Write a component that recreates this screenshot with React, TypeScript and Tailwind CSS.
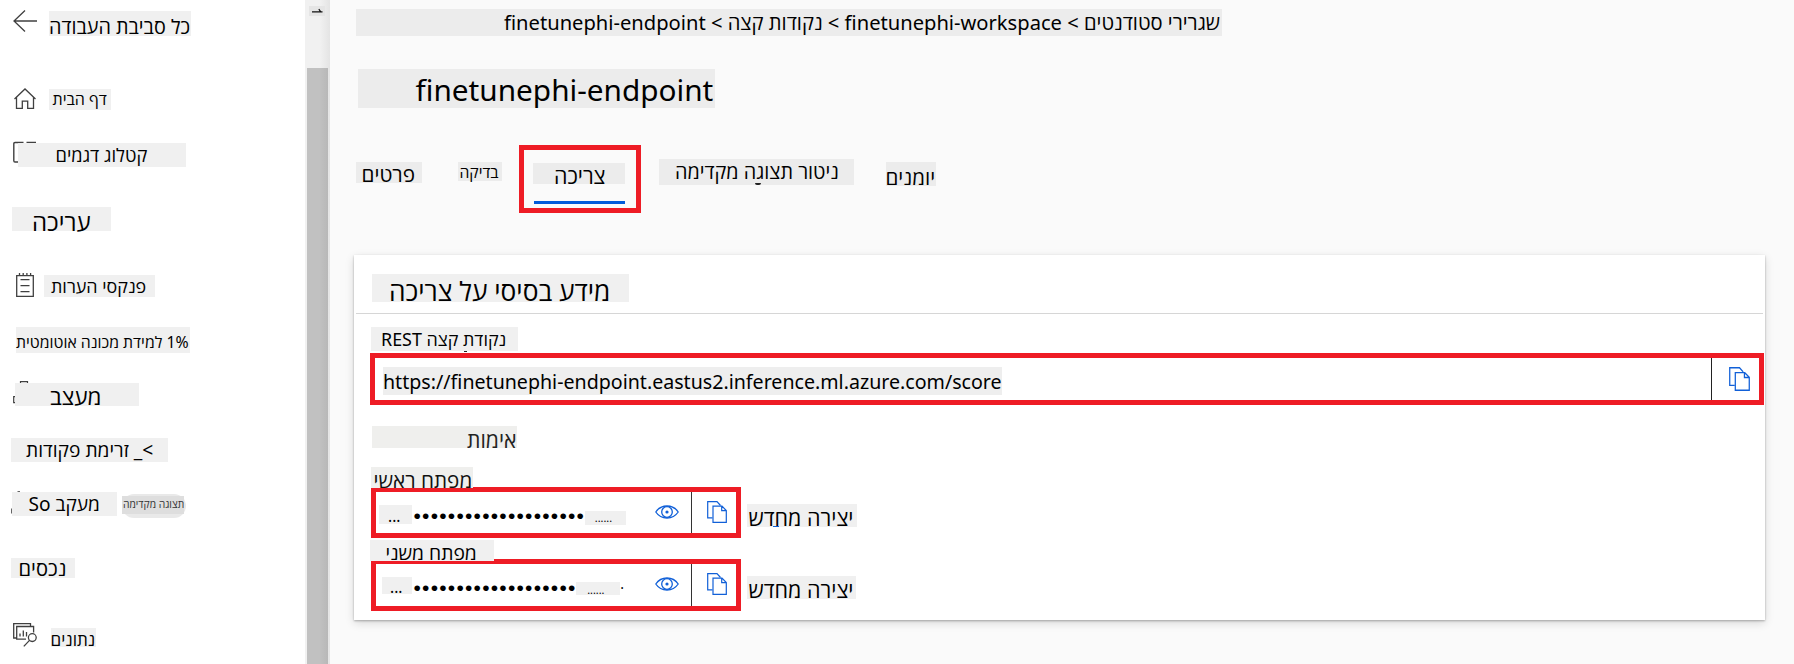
import type { ReactNode } from "react";

function Label({ box, text, children }: { box: string; text: string; children: ReactNode }) {
  return (
    <div className={`shrink-0 ${box}`}>
      <span dir="rtl" className={`block w-max whitespace-pre ${text}`}>
        {children}
      </span>
    </div>
  );
}

function ArrowLeft() {
  return (
    <svg className="ml-[13px] h-6 w-6 shrink-0" viewBox="0 0 24 24" fill="none" stroke="#404040" strokeWidth="1.3">
      <path d="M24 11H1M12 0.5L1 11l11 10.5" />
    </svg>
  );
}

function HomeIcon() {
  return (
    <svg className="ml-[14px] h-[22px] w-[22px] shrink-0" viewBox="0 0 22 22" fill="none" stroke="#404040" strokeWidth="1.3">
      <path d="M0.5 11L11 1l10.5 10M2.5 9.5v10.9h5.8v-7.2h5.4v7.2h5.8V9.5" />
    </svg>
  );
}

function CatalogIcon() {
  return (
    <svg className="ml-[13px] h-6 w-6 shrink-0" viewBox="0 0 24 24" fill="none" stroke="#404040" strokeWidth="1.4">
      <path d="M10.5 1.5H2a1.2 1.2 0 0 0-1.2 1.2v17.1A1.2 1.2 0 0 0 2 21h8M13.500 1.500H23" />
    </svg>
  );
}

function NotebookIcon() {
  return (
    <svg className="ml-[16px] h-6 w-[18px] shrink-0" viewBox="0 0 18 24" fill="none" stroke="#404040" strokeWidth="1.3">
      <path d="M0.700 2.700H17.300V23.300H0.700zM3.500 0v3M7.200 0v3M10.900 0v3M14.600 0v3M4.500 6.600h9M4.500 12.600h9M4.500 18.600h9" />
    </svg>
  );
}

function DesignerIcon() {
  return (
    <svg className="ml-[13px] h-[25px] w-[16px] shrink-0" viewBox="0 0 16 25" fill="none" stroke="#404040" strokeWidth="1.2">
      <path d="M7.500 3V0.700h7V3M3 15.700H0.700v6H3" />
    </svg>
  );
}

function DataIcon() {
  return (
    <svg className="ml-[13px] h-6 w-6 shrink-0" viewBox="0 0 24 24" fill="none" stroke="#404040" strokeWidth="1.3">
      <path d="M3.500 15H0.700V0.700H17.500V3M13 16.200H3.700V3.500H20.600V9.500M7 13.500v-3M10.300 13.500V7.500M13.500 13.500V9" />
      <circle cx="19.300" cy="14.600" r="3.900" />
      <path d="M16.500 17.400L10.800 23.400" />
    </svg>
  );
}

function EyeIcon() {
  return (
    <svg className="h-[14px] w-6" viewBox="0 0 24 14" fill="none" stroke="#1160d8" strokeWidth="1.300">
      <path d="M0.800 7C3.500 3 7.500 1 12 1s8.500 2 11.200 6C20.500 11 16.500 13 12 13S3.500 11 0.800 7z" />
      <circle cx="12" cy="7" r="5.300" />
      <circle cx="12" cy="7" r="1.600" fill="#1160d8" stroke="none" />
    </svg>
  );
}

function CopyIcon({ className }: { className: string }) {
  return (
    <svg className={className} viewBox="0 0 20 22" preserveAspectRatio="none" fill="none" stroke="#1160d8" strokeWidth="1.200">
      <path d="M5.500 16.900H0.700V0.700H10L13.500 4.500" />
      <path d="M6 5.200H15L19.300 9.500V21.300H6zM14.700 5.200V9.600H19.300" />
    </svg>
  );
}

function KeyField({ box, left, bullets, right }: { box: string; left: ReactNode; bullets: string; right: ReactNode }) {
  return (
    <div className={`flex w-[370px] shrink-0 border-[5px] border-[#ee1c25] ${box}`}>
      <div className="flex w-[315px] items-start">
        {left}
        <span className="ml-[1.500px] mt-[9px] shrink-0 font-['Liberation_Sans',sans-serif] text-[21px] leading-[30px] tracking-[1.230px] text-black">{bullets}</span>
        {right}
      </div>
      <div className="flex flex-1 border-l border-[#333] pl-[15px] pt-[9px]">
        <CopyIcon className="h-[22px] w-5" />
      </div>
    </div>
  );
}

const PANEL = "bg-[#f0f0f0]";
const CHIP = "bg-[#ececec]";

export default function App() {
  return (
    <div className="flex h-[664px] w-[1794px] overflow-hidden bg-[#fafafa] font-['Noto_Sans','Open_Sans',sans-serif] text-black">
      <nav className="flex w-[305px] shrink-0 flex-col bg-white">
        <div className="mt-[10px] flex h-[26px] shrink-0">
          <ArrowLeft />
          <Label box={`ml-3 mt-[1px] h-[25px] w-[142px] ${PANEL}`} text="text-[19.800px] leading-[31.500px]">כל סביבת העבודה</Label>
        </div>
        <div className="mt-[52px] flex h-[22px] shrink-0">
          <HomeIcon />
          <Label box={`ml-[13px] mt-[1px] h-[21px] w-[62px] ${PANEL}`} text="ml-[3.500px] text-[16px] font-medium leading-[21.400px]">דף הבית</Label>
        </div>
        <div className="mt-[31px] flex h-[26px] shrink-0">
          <CatalogIcon />
          <Label box={`-ml-[19px] mt-[2px] h-6 w-[168px] ${PANEL}`} text="ml-[37.500px] text-[18.300px] leading-[24.700px]">קטלוג דגמים</Label>
        </div>
        <Label box={`ml-3 mt-10 h-6 w-[99px] ${PANEL}`} text="ml-5 text-[24px] leading-[29px]">עריכה</Label>
        <div className="mt-[42px] flex h-6 shrink-0">
          <NotebookIcon />
          <Label box={`ml-[10px] mt-[2px] h-[22px] w-[111px] ${PANEL}`} text="ml-[7px] text-[17.900px] leading-[22px]">פנקסי הערות</Label>
        </div>
        <Label box={`ml-4 mt-[30px] h-[26px] w-[174px] ${PANEL}`} text="text-[15.800px] leading-[30.500px]">1% למידת מכונה אוטומטית</Label>
        <div className="mt-7 flex h-[25px] shrink-0">
          <DesignerIcon />
          <Label box={`-ml-[14px] mt-[2px] h-[23px] w-[124px] ${PANEL}`} text="ml-[35px] text-[22.500px] leading-[28.500px]">מעצב</Label>
        </div>
        <Label box={`ml-[11px] mt-8 h-6 w-[157px] ${PANEL}`} text="ml-[15px] text-[19.200px] leading-[23px]">{">_ זרימת פקודות"}</Label>
        <div className="mt-[29px] flex h-[27px] shrink-0">
          <svg className="ml-[11px] h-[27px] w-[9px] shrink-0" viewBox="0 0 9 27" fill="none" stroke="#666">
            <path d="M6.500 0.500h2.500M0.500 17.500v5" />
          </svg>
          <Label box={`-ml-2 mt-[1px] h-6 w-[105px] ${PANEL}`} text="ml-[16.500px] text-[19.100px] leading-[24.500px]">מעקב So</Label>
          <div className="ml-[5px] mt-[3px] h-6 w-[64px] rounded-r-full rounded-l-full bg-[#e9e9e9]">
            <Label box="mt-[2px] h-[18px] w-[62px] bg-[#dedede]" text="ml-px text-[10.300px] leading-[17.500px] text-[#333]">תצוגה מקדימה</Label>
          </div>
        </div>
        <Label box={`ml-[11px] mt-10 h-5 w-[64px] ${PANEL}`} text="ml-[7.500px] text-[20.100px] leading-[22.200px]">נכסים</Label>
        <div className="mt-[45px] flex h-6 shrink-0">
          <DataIcon />
          <Label box={`ml-[14px] mt-[5px] h-[19px] w-[45px] ${PANEL}`} text="-ml-[0.500px] text-[17.100px] leading-[23.600px]">נתונים</Label>
        </div>
      </nav>

      <div className="flex w-[25px] shrink-0 flex-col bg-gradient-to-r from-[#f1f1f1] from-60% to-[#e4e4e4]">
        <div className="ml-1 mt-[6px] flex h-[10px] w-4 shrink-0 items-center justify-center bg-[#e5e5e5]">
          <svg className="h-[6px] w-[11px]" viewBox="0 0 11 6" fill="none" stroke="#111" strokeWidth="1.200">
            <path d="M0 3.800h10.500M6.800 1.200l2 2.600" />
          </svg>
        </div>
        <div className="ml-[2px] mt-[52px] w-[21px] flex-1 bg-gradient-to-r from-[#c1c1c1] from-60% to-[#b8b8b8]" />
      </div>

      <main className="flex min-w-0 flex-1 flex-col pl-[24px]">
        <Label box={`ml-[2px] mt-[9px] h-[27px] w-[866px] ${CHIP}`} text="ml-[148px] text-[20.150px] leading-[27.500px]">
          {"שגרירי סטודנטים > finetunephi-workspace > נקודות קצה > finetunephi-endpoint"}
        </Label>
        <Label box={`ml-1 mt-[33px] h-[39px] w-[357px] ${CHIP}`} text="ml-[57.500px] text-[29.750px] leading-[41.500px]">finetunephi-endpoint</Label>

        <div className="ml-[2px] mt-[37px] flex h-[68px] shrink-0 items-start">
          <Label box={`mt-[17px] h-[21px] w-[66px] ${CHIP}`} text="ml-[5.500px] text-[20.700px] leading-[25px]">פרטים</Label>
          <Label box={`ml-9 mt-[17px] h-[19px] w-[44px] ${CHIP}`} text="ml-[1.500px] text-[15.700px] leading-[20px]">בדיקה</Label>
          <div className="ml-[17px] h-[68px] w-[122px] shrink-0 border-[5px] border-[#ee1c25] pl-[9px] pt-[13px]">
            <Label box={`h-[21px] w-[92px] ${CHIP}`} text="ml-[21px] text-[21.400px] leading-[26px]">צריכה</Label>
            <div className="ml-px mt-[17px] h-[3px] w-[91px] bg-[#015cda]" />
          </div>
          <div className="relative ml-[18px] mt-[14px] shrink-0">
            <Label box={`h-[26px] w-[195px] ${CHIP}`} text="ml-[16px] text-[19.850px] leading-[26.500px]">ניטור תצוגה מקדימה</Label>
            <div className="absolute left-[96px] top-[24px] h-[2px] w-[6px] rounded-b-full bg-[#222]" />
          </div>
          <Label box={`ml-8 mt-[17px] h-6 w-[50px] ${CHIP}`} text="-ml-[0.500px] text-[20.600px] leading-[31px]">יומנים</Label>
        </div>

        <section className="mt-[42px] flex h-[365px] w-[1411px] shrink-0 flex-col bg-white shadow-[0_1px_2px_rgba(0,0,0,0.28),0_3px_9px_rgba(0,0,0,0.14)]">
          <Label box={`ml-[18px] mt-[19px] h-7 w-[257px] ${PANEL}`} text="ml-[17px] text-[26.300px] leading-[34.500px]">מידע בסיסי על צריכה</Label>
          <div className="mx-[2px] mt-[11px] h-px shrink-0 bg-[#d6d6d6]" />
          <div className="relative ml-[17px] mt-[13px] h-6 shrink-0">
            <Label box={`h-6 w-[147px] ${PANEL}`} text="ml-[10px] text-[17.900px] leading-[24.500px]">נקודת קצה REST</Label>
            <div className="absolute left-[93px] top-[24px] h-px w-[3px] bg-[#222]" />
          </div>
          <div className="ml-4 mt-[2px] flex h-[52px] w-[1394px] shrink-0 border-[5px] border-[#ee1c25]">
            <div className="w-[1336px] pl-2 pt-[9px]">
              <Label box="h-7 w-[619px] bg-[#eeeeee]" text="text-[19.620px] leading-[29.500px]">https://finetunephi-endpoint.eastus2.inference.ml.azure.com/score</Label>
            </div>
            <div className="flex flex-1 border-l border-[#222] pl-[17px] pt-[9px]">
              <CopyIcon className="h-6 w-[21px]" />
            </div>
          </div>
          <Label box="ml-[18px] mt-[21px] h-[22px] w-[145px] bg-[#efefed]" text="ml-[95px] text-[21.200px] leading-[27px] text-[#222]">אימות</Label>
          <Label box="relative z-10 ml-[17px] mt-[19px] h-[21px] w-[102px] bg-[#efefed]" text="ml-[2.500px] text-[20.700px] leading-[26.500px] text-[#111]">מפתח ראשי</Label>
          <div className="-mt-px ml-[17px] flex h-[51px] shrink-0">
            <KeyField
              box="h-[51px]"
              bullets="•••••••••••••••••••••"
              left={<Label box={`ml-[3px] mt-[13px] h-[19px] w-[33px] ${PANEL}`} text="ml-[9px] text-[15.500px] leading-[22px]">...</Label>}
              right={
                <>
                  <Label box={`relative -ml-[9px] mt-[19px] h-[14px] w-[41px] ${PANEL}`} text="ml-[10px] text-[10.800px] leading-[14px]">......</Label>
                  <div className="ml-[29px] mt-[13px]"><EyeIcon /></div>
                </>
              }
            />
            <div className="relative ml-[6px] mt-[17px] shrink-0">
              <Label box={`h-[23px] w-[110px] ${PANEL}`} text="ml-[1.500px] text-[21.500px] leading-[27px]">יצירה מחדש</Label>
              <div className="absolute left-[26px] top-[22px] h-px w-[6px] bg-[#1160d8]" />
            </div>
          </div>
          <Label box={`relative z-10 ml-4 mt-[2px] h-[21px] w-[124px] ${PANEL}`} text="ml-[15.500px] text-[19.300px] leading-[26px]">מפתח משני</Label>
          <div className="-mt-[2px] ml-[17px] flex h-[52px] shrink-0">
            <KeyField
              box="h-[52px]"
              bullets="••••••••••••••••••••"
              left={<Label box={`ml-[6px] mt-[13px] h-[17px] w-[30px] ${PANEL}`} text="ml-[8px] text-[15.500px] leading-[20px]">...</Label>}
              right={
                <>
                  <Label box={`relative -ml-[9px] mt-[18px] h-[13px] w-[44px] ${PANEL}`} text="ml-[11px] text-[10.800px] leading-[16px]">......</Label>
                  <span className="mt-[10px] w-[5px] text-[14px] leading-[20px]">.</span>
                  <div className="ml-[30px] mt-[13px]"><EyeIcon /></div>
                </>
              }
            />
            <Label box={`ml-[6px] mt-[17px] h-[23px] w-[109px] ${PANEL}`} text="ml-[1.500px] text-[21.500px] leading-[28.500px]">יצירה מחדש</Label>
          </div>
        </section>
      </main>
    </div>
  );
}
